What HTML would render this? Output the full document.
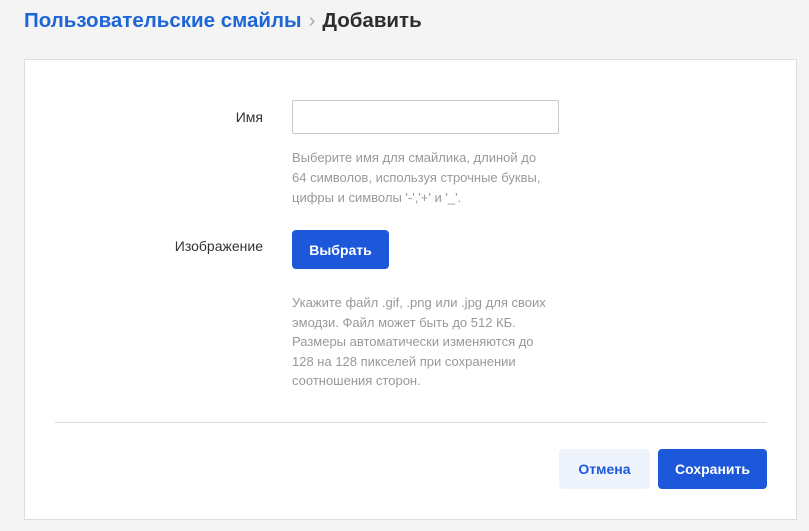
<!DOCTYPE html>
<html><head><meta charset="utf-8"><style>
*{margin:0;padding:0;box-sizing:border-box}
body{width:809px;height:531px;background:#f4f4f4;font-family:"Liberation Sans","DejaVu Sans",sans-serif;position:relative;overflow:hidden}
.h{position:absolute;left:24px;top:9px;font-size:20.5px;font-weight:bold;white-space:nowrap}
.h .b{color:#1d65d8}
.h .s{color:#aaa;font-weight:normal;margin:0 7px}
.h .c{color:#2d2d2d}
.p{position:absolute;left:24px;top:59px;width:773px;height:461px;background:#fff;border:1px solid #ddd}
.a{position:absolute;font-size:14px;color:#333;text-align:right;width:140px}
.in{position:absolute;left:267px;top:40px;width:267px;height:34px;border:1px solid #c8c8c8;border-radius:2px}
.t{position:absolute;left:267px;font-size:13px;color:#999;line-height:20px;width:262px}
.btn{position:absolute;border-radius:4px;font-size:14px;font-weight:bold;display:flex;align-items:center;justify-content:center}
.pr{background:#1c58d9;color:#fff}
.sc{background:#eff3fc;color:#1c58d9}
.hr{position:absolute;left:30px;top:362px;width:712px;height:1px;background:#ddd}
</style></head><body>
<div class="h"><span class="b">Пользовательские смайлы</span><span class="s">›</span><span class="c">Добавить</span></div>
<div class="p">
<div class="a" style="left:98px;top:49px">Имя</div>
<div class="in"></div>
<div class="t" style="top:88px">Выберите имя для смайлика, длиной до 64 символов, используя строчные буквы, цифры и символы '-','+' и '_'.</div>
<div class="a" style="left:98px;top:178px">Изображение</div>
<div class="btn pr" style="left:267px;top:170px;width:97px;height:39px">Выбрать</div>
<div class="t" style="top:233px;line-height:19.5px">Укажите файл .gif, .png или .jpg для своих эмодзи. Файл может быть до 512 КБ. Размеры автоматически изменяются до 128 на 128 пикселей при сохранении соотношения сторон.</div>
<div class="hr"></div>
<div class="btn sc" style="left:534px;top:389px;width:91px;height:40px">Отмена</div>
<div class="btn pr" style="left:633px;top:389px;width:109px;height:40px">Сохранить</div>
</div>
</body></html>
